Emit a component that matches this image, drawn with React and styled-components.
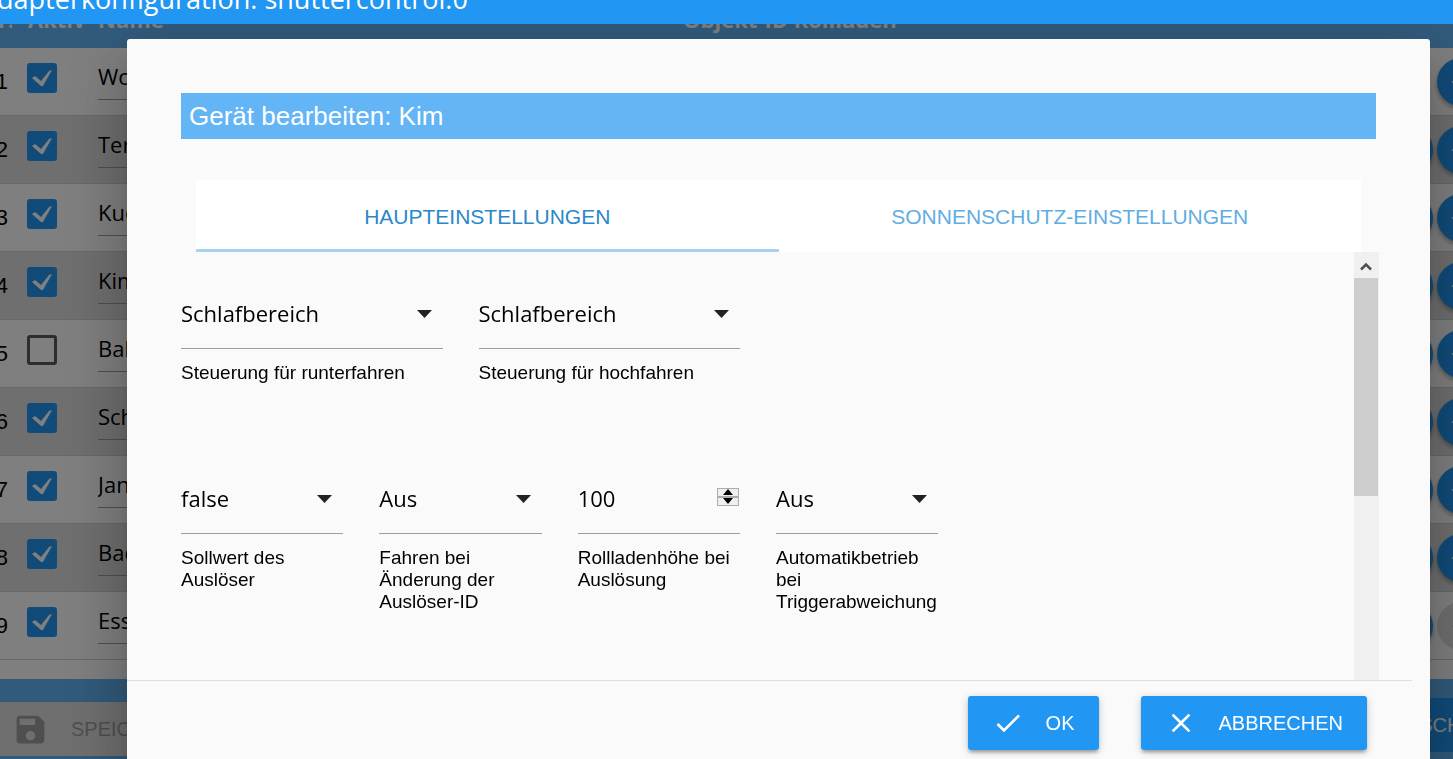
import React from "react";
import styled, { createGlobalStyle } from "styled-components";
import { MdCheck, MdClose, MdSave, MdArrowBack } from "react-icons/md";

const GlobalStyle = createGlobalStyle`
  * {
    box-sizing: border-box;
  }
  body {
    margin: 0;
    overflow: hidden;
    color: #000;
    background: #fff;
    font-family: "Liberation Sans", Arial, sans-serif;
  }
  button, input, select {
    margin: 0;
    border: 0;
    font-family: inherit;
  }
`;

const Page = styled.div`
  height: 100vh;
  overflow: hidden;
`;
const TopBar = styled.header`
  position: relative;
  z-index: 3;
  display: flex;
  align-items: flex-end;
  height: 24px;
  margin-left: -20px;
  background: #2196f3;
`;
const TopTitle = styled.h1`
  margin: 0 0 7px;
  color: #fff;
  font: 400 27px/36px "Open Sans", "Noto Sans", sans-serif;
  white-space: nowrap;
`;
const Bleed = styled.div`
  margin: 0 -40px 0 -28px;
`;
const Table = styled.table`
  width: 100%;
  table-layout: fixed;
  border-collapse: separate;
  border-spacing: 0;
`;
const HeadCell = styled.th`
  width: ${(props) => props.$width || "auto"};
  height: 24px;
  padding: 0 8px;
  color: #fff;
  background: #64b5f6;
  text-align: left;
  font: 700 22px/24px "Open Sans", "Noto Sans", sans-serif;
`;
const HeadText = styled.div`
  display: flex;
  align-items: flex-end;
  height: 24px;
  padding-bottom: 17px;
  overflow: hidden;
  white-space: nowrap;
  line-height: 24px;
`;
const Row = styled.tr`
  background: ${(props) => (props.$even ? "#dedede" : "#fff")};
`;
const Cell = styled.td`
  height: 68px;
  padding: 0 8px;
  border-bottom: 1px solid #d0d0d0;
  font-size: 22px;
`;
const NumberCell = styled(Cell)`
  padding: 0 12px 0 0;
  text-align: right;
`;
const CheckCell = styled(Cell)`
  padding: 0 7px;
`;
const CheckLabel = styled.label`
  display: flex;
  align-items: center;
  justify-content: center;
  width: 30px;
  height: 30px;
  margin: 0 0 7px;
  border: ${(props) => (props.$on ? "0" : "3px solid #5a5a5a")};
  border-radius: 3px;
  color: #fff;
  background: ${(props) => (props.$on ? "#2196f3" : "transparent")};
`;
const HiddenCheck = styled.input`
  position: absolute;
  opacity: 0;
`;
const NameInput = styled.input`
  display: block;
  width: 100%;
  height: 46px;
  margin-bottom: 10px;
  padding: 0;
  border-bottom: 1px solid #9e9e9e;
  background: transparent;
  font: 400 22px/44px "Open Sans", "Noto Sans", sans-serif;
`;
const Actions = styled.div`
  display: flex;
  justify-content: flex-end;
  gap: 4px;
`;
const RoundButton = styled.button`
  display: flex;
  align-items: center;
  justify-content: center;
  width: 48px;
  height: 48px;
  padding: 0;
  border-radius: 50%;
  color: ${(props) => (props.disabled ? "#c8c8c8" : "#fff")};
  background: ${(props) => (props.disabled ? "#dfdfdf" : "#2196f3")};
  box-shadow: ${(props) =>
    props.disabled ? "none" : "0 3px 4px rgba(0, 0, 0, 0.3)"};
`;
const BottomBar = styled.footer`
  display: flex;
  justify-content: space-between;
  height: 100px;
  margin: 19px -77px 0 0;
  padding: 19px 0 23px;
  background: #64b5f6;
`;
const BarButton = styled.button`
  display: flex;
  align-items: center;
  gap: 22px;
  height: 54px;
  padding: 0 24px;
  align-self: ${(props) => (props.disabled ? "flex-end" : "flex-start")};
  color: ${(props) => (props.disabled ? "#9f9f9f" : "#fff")};
  background: ${(props) => (props.disabled ? "#dfdfdf" : "#2196f3")};
  font-size: 20px;
  text-transform: uppercase;
`;
const SaveButton = styled(BarButton)`
  width: 400px;
  padding-left: 40px;
`;

const Overlay = styled.div`
  position: fixed;
  z-index: 1;
  inset: 24px 0 0;
  background: rgba(0, 0, 0, 0.5);
`;
const Modal = styled.section`
  position: fixed;
  z-index: 2;
  inset: 39px 23px -24px 127px;
  display: flex;
  flex-direction: column;
  border-radius: 3px;
  background: #fafafa;
  box-shadow: 0 36px 57px 5px rgba(0, 0, 0, 0.14),
    0 14px 69px 12px rgba(0, 0, 0, 0.12), 0 16px 22px -10px rgba(0, 0, 0, 0.2);
`;
const ModalBody = styled.div`
  display: flex;
  flex: 1;
  flex-direction: column;
  min-height: 0;
  padding: 54px 51px 0 54px;
`;
const ModalTitle = styled.h2`
  margin: 0 3px 41px 0;
  padding: 0 8px;
  color: #fff;
  background: #64b5f6;
  font-size: 26px;
  font-weight: 400;
  line-height: 46px;
`;
const Tabs = styled.nav`
  display: grid;
  grid-template-columns: 1fr 1fr;
  flex: none;
  height: 72px;
  margin: 0 18px 0 15px;
  background: #fff;
`;
const Tab = styled.a`
  padding-top: 4px;
  border-bottom: 3px solid ${(props) => (props.$active ? "#a6d4ed" : "#fff")};
  color: ${(props) => (props.$active ? "#2a87cb" : "#61ade2")};
  font-size: 21px;
  line-height: 65px;
  text-align: center;
  text-decoration: none;
  text-transform: uppercase;
`;
const ScrollArea = styled.div`
  display: flex;
  flex: 1;
  min-height: 0;
`;
const Form = styled.form`
  display: flex;
  flex: 1;
  flex-direction: column;
  gap: 80px;
  padding: 27px 19px 0 0;
  overflow: hidden;
`;
const FieldRow = styled.div`
  display: grid;
  grid-template-columns: repeat(${(props) => props.$columns}, 1fr);
  column-gap: 36px;
`;
const Field = styled.div`
  min-width: 0;
`;
const Control = styled.div`
  display: flex;
  align-items: center;
  height: 70px;
  border-bottom: 1px solid #9e9e9e;
`;
const controlText = `
  flex: 1;
  min-width: 0;
  width: 100%;
  height: 69px;
  padding: 0 0 2px;
  outline: 0;
  color: #000;
  background: transparent;
  appearance: none;
  font: 400 22px/30px "Open Sans", "Noto Sans", sans-serif;
`;
const Select = styled.select`
  ${controlText}
`;
const NumberInput = styled.input`
  ${controlText}
  appearance: textfield;
`;
const Caret = styled.svg`
  flex: none;
  width: 15px;
  height: 8px;
  margin-right: 11px;
`;
const Label = styled.label`
  display: block;
  margin-top: 13px;
  font-size: 19px;
  line-height: 22px;
`;
const Spinner = styled.div`
  display: grid;
  width: 22px;
  margin: 0 1px 4px 0;
`;
const SpinButton = styled.button`
  display: flex;
  align-items: center;
  justify-content: center;
  height: 9px;
  padding: 0;
  border: 1px solid #acacac;
  background: #efefef;
`;
const ScrollBar = styled.div`
  display: flex;
  flex-direction: column;
  width: 25px;
  padding-right: 1px;
  background: #f0f0f0;
`;
const ScrollUp = styled.button`
  display: flex;
  align-items: center;
  justify-content: center;
  height: 26px;
  padding: 2px 0 0;
  background: #f0f0f0;
`;
const ScrollThumb = styled.div`
  height: 51%;
  background: #cdcdcd;
`;
const ModalFooter = styled.footer`
  display: flex;
  justify-content: flex-end;
  gap: 42px;
  height: 103px;
  margin-right: 18px;
  padding: 15px 45px 0 0;
  border-top: 1px solid #dedede;
`;
const ModalButton = styled.button`
  display: flex;
  align-items: center;
  gap: 22px;
  height: 54px;
  padding: 0 24px;
  border-radius: 3px;
  color: #fff;
  background: #2196f3;
  box-shadow: 0 3px 3px rgba(0, 0, 0, 0.14), 0 5px 2px -3px rgba(0, 0, 0, 0.12),
    0 2px 8px rgba(0, 0, 0, 0.2);
  font-size: 20px;
  text-transform: uppercase;
`;

const shutters = [
  { name: "Wohnzimmer", active: true, up: false, down: true },
  { name: "Terrasse", active: true, up: true, down: true },
  { name: "Kueche", active: true, up: true, down: true },
  { name: "Kim", active: true, up: true, down: true },
  { name: "Balkon", active: false, up: true, down: true },
  { name: "Schlafzimmer", active: true, up: true, down: true },
  { name: "Jan", active: true, up: true, down: true },
  { name: "Bad", active: true, up: true, down: true },
  { name: "Esszimmer", active: true, up: true, down: false },
];

function ShutterRow({ shutter, index }) {
  const [active, setActive] = React.useState(shutter.active);

  return (
    <Row $even={index % 2 === 1}>
      <NumberCell>{index + 1}</NumberCell>
      <CheckCell>
        <CheckLabel $on={active}>
          <HiddenCheck
            type="checkbox"
            aria-label={`${shutter.name} aktiv`}
            checked={active}
            onChange={(e) => setActive(e.target.checked)}
          />
          {active && (
            <svg width="20" height="16" viewBox="0 0 20 16">
              <path d="M0 8L3 6L9 11L17 1L20 0L11 16H9z" fill="currentColor" />
            </svg>
          )}
        </CheckLabel>
      </CheckCell>
      <Cell>
        <NameInput aria-label="Name" defaultValue={shutter.name} />
      </Cell>
      <Cell />
      <Cell>
        <Actions>
          {shutter.up && <RoundButton aria-label="Bearbeiten" />}
          <RoundButton aria-label="Verschieben" disabled={!shutter.down}>
            <MdArrowBack size={28} />
          </RoundButton>
        </Actions>
      </Cell>
    </Row>
  );
}

function SelectField({ id, label, options }) {
  return (
    <Field>
      <Control>
        <Select id={id}>
          {options.map((option) => (
            <option key={option}>{option}</option>
          ))}
        </Select>
        <Caret viewBox="0 0 15 8">
          <path d="M0 0h15L7.500 8z" fill="#212121" />
        </Caret>
      </Control>
      <Label htmlFor={id}>{label}</Label>
    </Field>
  );
}

function NumberField({ id, label, initial }) {
  const [value, setValue] = React.useState(initial);

  return (
    <Field>
      <Control>
        <NumberInput
          id={id}
          type="number"
          value={value}
          onChange={(e) => setValue(Number(e.target.value))}
        />
        <Spinner>
          <SpinButton
            type="button"
            aria-label="Mehr"
            onClick={() => setValue(value + 1)}
          >
            <svg width="10" height="6" viewBox="0 0 10 6">
              <path d="M0 6h10L5 0z" />
            </svg>
          </SpinButton>
          <SpinButton
            type="button"
            aria-label="Weniger"
            onClick={() => setValue(value - 1)}
          >
            <svg width="10" height="6" viewBox="0 0 10 6">
              <path d="M0 0h10L5 6z" />
            </svg>
          </SpinButton>
        </Spinner>
      </Control>
      <Label htmlFor={id}>{label}</Label>
    </Field>
  );
}

function EditDialog() {
  const [tab, setTab] = React.useState("main");
  const areas = ["Schlafbereich", "Wohnbereich", "Kinderbereich"];

  return (
    <Modal role="dialog" aria-labelledby="dialog-title">
      <ModalBody>
        <ModalTitle id="dialog-title">Gerät bearbeiten: Kim</ModalTitle>
        <Tabs>
          <Tab href="#main" $active={tab === "main"} onClick={() => setTab("main")}>
            Haupteinstellungen
          </Tab>
          <Tab href="#sun" $active={tab === "sun"} onClick={() => setTab("sun")}>
            Sonnenschutz-Einstellungen
          </Tab>
        </Tabs>
        <ScrollArea>
          <Form>
            <FieldRow $columns={4}>
              <SelectField id="down" label="Steuerung für runterfahren" options={areas} />
              <SelectField id="up" label="Steuerung für hochfahren" options={areas} />
            </FieldRow>
            <FieldRow $columns={6}>
              <SelectField
                id="trigger"
                label="Sollwert des Auslöser"
                options={["false", "true"]}
              />
              <SelectField
                id="drive"
                label="Fahren bei Änderung der Auslöser-ID"
                options={["Aus", "An"]}
              />
              <NumberField
                id="height"
                label="Rollladenhöhe bei Auslösung"
                initial={100}
              />
              <SelectField
                id="auto"
                label="Automatikbetrieb bei Triggerabweichung"
                options={["Aus", "An"]}
              />
            </FieldRow>
          </Form>
          <ScrollBar>
            <ScrollUp aria-label="Nach oben">
              <svg width="12" height="9" viewBox="0 0 12 9">
                <path
                  d="M1 7.500L6 2.500L11 7.500"
                  fill="none"
                  stroke="#505050"
                  strokeWidth="2.500"
                />
              </svg>
            </ScrollUp>
            <ScrollThumb />
          </ScrollBar>
        </ScrollArea>
      </ModalBody>
      <ModalFooter>
        <ModalButton>
          <MdCheck size={32} />
          Ok
        </ModalButton>
        <ModalButton>
          <MdClose size={32} />
          Abbrechen
        </ModalButton>
      </ModalFooter>
    </Modal>
  );
}

function App() {
  return (
    <Page>
      <GlobalStyle />
      <TopBar>
        <TopTitle>Adapterkonfiguration: shuttercontrol.0</TopTitle>
      </TopBar>
      <Bleed>
        <Table>
          <thead>
            <tr>
              <HeadCell $width="48px">
                <HeadText>Nr.</HeadText>
              </HeadCell>
              <HeadCell $width="70px">
                <HeadText>Aktiv</HeadText>
              </HeadCell>
              <HeadCell $width="585px">
                <HeadText>Name</HeadText>
              </HeadCell>
              <HeadCell>
                <HeadText>Objekt-ID Rollladen</HeadText>
              </HeadCell>
              <HeadCell $width="116px" />
            </tr>
          </thead>
          <tbody>
            {shutters.map((shutter, index) => (
              <ShutterRow key={shutter.name} shutter={shutter} index={index} />
            ))}
          </tbody>
        </Table>
        <BottomBar>
          <SaveButton disabled>
            <MdSave size={37} />
            Speichern
          </SaveButton>
          <BarButton>Schliessen</BarButton>
        </BottomBar>
      </Bleed>
      <Overlay />
      <EditDialog />
    </Page>
  );
}

export default App;
